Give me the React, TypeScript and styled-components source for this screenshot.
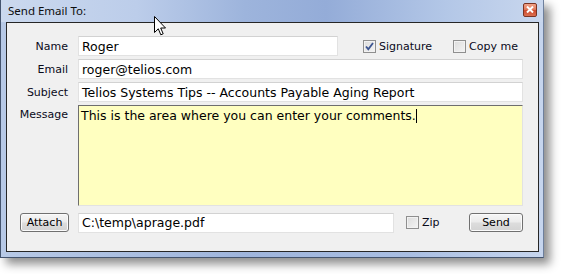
import React from "react";
import styled, { createGlobalStyle } from "styled-components";

const GlobalStyle = createGlobalStyle`
  html, body {
    margin: 0;
    padding: 0;
    background: #ffffff;
  }
`;

const uiFont = `"DejaVu Sans", Verdana, sans-serif`;

const Stage = styled.div`
  position: relative;
  width: 561px;
  height: 274px;
  overflow: hidden;
`;

const Window = styled.div`
  width: 544px;
  height: 258px;
  box-sizing: border-box;
  display: flex;
  flex-direction: column;
  background: linear-gradient(90deg, #b7c9e6 0%, #9fb5dc 45%, #a9bee2 75%, #c6d5ee 100%);
  border-left: 1px solid #44546e;
  border-right: 1px solid #6d7f9c;
  border-bottom: 1px solid #44546e;
  box-shadow: 6px 6px 9px rgba(0, 0, 0, 0.45);
`;

const TitleBar = styled.div`
  height: 22px;
  flex: none;
  display: flex;
  align-items: center;
  justify-content: space-between;
  padding: 0 6px 0 7px;
  background: linear-gradient(
    90deg,
    #cbd9ee 0%,
    #bccdea 25%,
    #9db4dc 45%,
    #94acd8 60%,
    #b3c7e7 82%,
    #c9d7ee 100%
  );
`;

const TitleText = styled.span`
  font-family: "Noto Sans", "Open Sans", sans-serif;
  font-size: 11.5px;
  color: #0d0d0d;
  margin-top: -1px;
`;

const CloseButton = styled.div`
  width: 14px;
  height: 14px;
  box-sizing: border-box;
  margin-top: -3px;
  border: 1px solid #7b3424;
  border-radius: 2px;
  background: linear-gradient(180deg, #f0a288 0%, #e07a5c 45%, #cc4a2e 55%, #dc6f50 100%);
  display: flex;
  align-items: center;
  justify-content: center;
`;

const Client = styled.div`
  flex: 1;
  margin: 0 4px 5px 5px;
  border: 1px solid #262626;
  background: #f0f0f0;
  padding: 13px 15px 0 12px;
`;

const FormGrid = styled.div`
  display: grid;
  grid-template-columns: 50px 1fr;
  grid-template-rows: 20px 20px 20px 101px 20px;
  column-gap: 9px;
  row-gap: 3px;
`;

const Label = styled.div<{ $top?: boolean }>`
  font-family: ${uiFont};
  font-size: 11px;
  color: #0a0a1a;
  text-align: right;
  align-self: ${(p) => (p.$top ? "start" : "center")};
  padding-top: ${(p) => (p.$top ? "3px" : "0")};
  padding-right: 1px;
`;

const Field = styled.div<{ $width?: number }>`
  box-sizing: border-box;
  height: 20px;
  width: ${(p) => (p.$width ? `${p.$width}px` : "100%")};
  flex: none;
  background: #ffffff;
  border: 1px solid #e2e2e2;
  border-top-color: #d2d2d2;
  padding: 0 3px;
  display: flex;
  align-items: center;
  font-family: ${uiFont};
  font-size: 12.5px;
  color: #000000;
  white-space: nowrap;
`;

const MessageBox = styled.div`
  box-sizing: border-box;
  height: 101px;
  background: #ffffc0;
  border: 1px solid #e2e2e2;
  border-top-color: #6e6e6e;
  border-left-color: #6e6e6e;
  padding: 2px 2px;
  font-family: ${uiFont};
  font-size: 12.5px;
  color: #000000;
`;

const Caret = styled.span`
  display: inline-block;
  width: 1px;
  height: 14px;
  background: #000;
  vertical-align: -3px;
`;

const Row = styled.div<{ $shift?: number }>`
  display: flex;
  align-items: center;
  margin-top: ${(p) => (p.$shift ? `${p.$shift}px` : "0")};
`;

const Options = styled.div`
  display: flex;
  align-items: center;
  gap: 21px;
  margin-left: 25px;
`;

const Option = styled.label<{ $offset?: number }>`
  display: flex;
  align-items: center;
  gap: 3px;
  margin-left: ${(p) => (p.$offset ? `${p.$offset}px` : "0")};
  font-family: ${uiFont};
  font-size: 11px;
  color: #0a0a1a;
`;

const Box = styled.span`
  width: 13px;
  height: 13px;
  box-sizing: border-box;
  border: 1px solid #8f8f8f;
  background: linear-gradient(135deg, #dcdcdc 0%, #f4f4f4 100%);
  box-shadow: inset 0 0 0 1px #f2f2f2;
  display: flex;
  align-items: center;
  justify-content: center;
`;

const PushButton = styled.div<{ $width: number }>`
  box-sizing: border-box;
  width: ${(p) => p.$width}px;
  height: 19px;
  border: 1px solid #707070;
  border-radius: 3px;
  background: linear-gradient(180deg, #f6f6f6 0%, #ebebeb 48%, #dddddd 52%, #d3d3d3 100%);
  box-shadow: inset 0 0 0 1px #fbfbfb;
  display: flex;
  align-items: center;
  justify-content: center;
  font-family: ${uiFont};
  font-size: 11px;
  color: #000;
`;

const AttachCell = styled.div`
  justify-self: end;
  align-self: center;
  margin-top: 7px;
`;

const SendSlot = styled.div`
  margin-left: auto;
`;

const Cursor = styled.svg`
  position: absolute;
  left: 154px;
  top: 16px;
`;

const Check = ({ checked }: { checked?: boolean }) => (
  <Box>
    {checked && (
      <svg width="9" height="9" viewBox="0 0 9 9">
        <path
          d="M1 4.5 L3.3 7.2 L8 1"
          fill="none"
          stroke="#3d5591"
          strokeWidth="1.8"
        />
      </svg>
    )}
  </Box>
);

const App = () => (
  <Stage>
    <GlobalStyle />
    <Window>
      <TitleBar>
        <TitleText>Send Email To:</TitleText>
        <CloseButton>
          <svg width="8" height="7" viewBox="0 0 8 7">
            <path
              d="M1 0.5 L7 6.5 M7 0.5 L1 6.5"
              stroke="#ffffff"
              strokeWidth="2"
            />
          </svg>
        </CloseButton>
      </TitleBar>
      <Client>
        <FormGrid>
          <Label>Name</Label>
          <Row>
            <Field $width={260}>Roger</Field>
            <Options>
              <Option>
                <Check checked />
                Signature
              </Option>
              <Option>
                <Check />
                Copy me
              </Option>
            </Options>
          </Row>

          <Label>Email</Label>
          <Field>roger@telios.com</Field>

          <Label>Subject</Label>
          <Field>Telios Systems Tips -- Accounts Payable Aging Report</Field>

          <Label $top>Message</Label>
          <MessageBox>
            This is the area where you can enter your comments.
            <Caret />
          </MessageBox>

          <AttachCell>
            <PushButton $width={49}>Attach</PushButton>
          </AttachCell>
          <Row $shift={7}>
            <Field $width={316}>C:\temp\aprage.pdf</Field>
            <Option $offset={12}>
              <Check />
              Zip
            </Option>
            <SendSlot>
              <PushButton $width={54}>Send</PushButton>
            </SendSlot>
          </Row>
        </FormGrid>
      </Client>
    </Window>
    <Cursor width="13" height="21" viewBox="0 0 13 21">
      <path
        d="M0.5 0.5 L0.5 16.5 L4.3 12.8 L6.8 18.8 L9.2 17.8 L6.7 12 L11.5 12 Z"
        fill="#ffffff"
        stroke="#000000"
        strokeWidth="1"
      />
    </Cursor>
  </Stage>
);

export default App;
